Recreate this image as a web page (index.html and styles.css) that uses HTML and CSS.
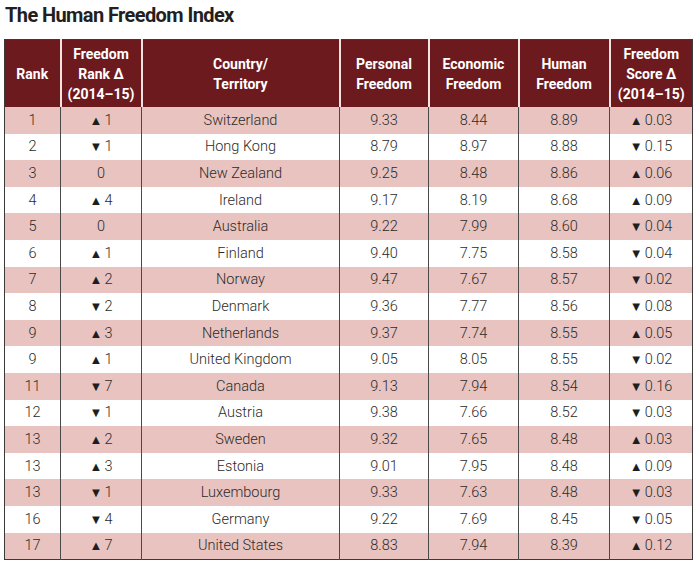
FILE: index.html
```html
<!DOCTYPE html>
<html lang="en">
<head>
<meta charset="utf-8">
<title>The Human Freedom Index</title>
<link rel="stylesheet" href="styles.css">
</head>
<body>
<div class="page">
  <h1 class="title">The Human Freedom Index</h1>
  <table class="hfi">
    <colgroup>
      <col class="c-rank"><col class="c-rd"><col class="c-country"><col class="c-pf"><col class="c-ef"><col class="c-hf"><col class="c-sd">
    </colgroup>
    <thead>
      <tr>
        <th>Rank</th>
        <th>Freedom<br>Rank Δ<br>(2014–15)</th>
        <th>Country/<br>Territory</th>
        <th>Personal<br>Freedom</th>
        <th>Economic<br>Freedom</th>
        <th>Human<br>Freedom</th>
        <th>Freedom<br>Score Δ<br>(2014–15)</th>
      </tr>
    </thead>
    <tbody>
      <tr class="alt"><td>1</td><td><span class="tri">▲</span>1</td><td>Switzerland</td><td>9.33</td><td>8.44</td><td>8.89</td><td><span class="tri">▲</span>0.03</td></tr>
      <tr><td>2</td><td><span class="tri">▼</span>1</td><td>Hong Kong</td><td>8.79</td><td>8.97</td><td>8.88</td><td><span class="tri">▼</span>0.15</td></tr>
      <tr class="alt"><td>3</td><td>0</td><td>New Zealand</td><td>9.25</td><td>8.48</td><td>8.86</td><td><span class="tri">▲</span>0.06</td></tr>
      <tr><td>4</td><td><span class="tri">▲</span>4</td><td>Ireland</td><td>9.17</td><td>8.19</td><td>8.68</td><td><span class="tri">▲</span>0.09</td></tr>
      <tr class="alt"><td>5</td><td>0</td><td>Australia</td><td>9.22</td><td>7.99</td><td>8.60</td><td><span class="tri">▼</span>0.04</td></tr>
      <tr><td>6</td><td><span class="tri">▲</span>1</td><td>Finland</td><td>9.40</td><td>7.75</td><td>8.58</td><td><span class="tri">▼</span>0.04</td></tr>
      <tr class="alt"><td>7</td><td><span class="tri">▲</span>2</td><td>Norway</td><td>9.47</td><td>7.67</td><td>8.57</td><td><span class="tri">▼</span>0.02</td></tr>
      <tr><td>8</td><td><span class="tri">▼</span>2</td><td>Denmark</td><td>9.36</td><td>7.77</td><td>8.56</td><td><span class="tri">▼</span>0.08</td></tr>
      <tr class="alt"><td>9</td><td><span class="tri">▲</span>3</td><td>Netherlands</td><td>9.37</td><td>7.74</td><td>8.55</td><td><span class="tri">▲</span>0.05</td></tr>
      <tr><td>9</td><td><span class="tri">▲</span>1</td><td>United Kingdom</td><td>9.05</td><td>8.05</td><td>8.55</td><td><span class="tri">▼</span>0.02</td></tr>
      <tr class="alt"><td>11</td><td><span class="tri">▼</span>7</td><td>Canada</td><td>9.13</td><td>7.94</td><td>8.54</td><td><span class="tri">▼</span>0.16</td></tr>
      <tr><td>12</td><td><span class="tri">▼</span>1</td><td>Austria</td><td>9.38</td><td>7.66</td><td>8.52</td><td><span class="tri">▼</span>0.03</td></tr>
      <tr class="alt"><td>13</td><td><span class="tri">▲</span>2</td><td>Sweden</td><td>9.32</td><td>7.65</td><td>8.48</td><td><span class="tri">▲</span>0.03</td></tr>
      <tr><td>13</td><td><span class="tri">▲</span>3</td><td>Estonia</td><td>9.01</td><td>7.95</td><td>8.48</td><td><span class="tri">▲</span>0.09</td></tr>
      <tr class="alt"><td>13</td><td><span class="tri">▼</span>1</td><td>Luxembourg</td><td>9.33</td><td>7.63</td><td>8.48</td><td><span class="tri">▼</span>0.03</td></tr>
      <tr><td>16</td><td><span class="tri">▼</span>4</td><td>Germany</td><td>9.22</td><td>7.69</td><td>8.45</td><td><span class="tri">▼</span>0.05</td></tr>
      <tr class="alt"><td>17</td><td><span class="tri">▲</span>7</td><td>United States</td><td>8.83</td><td>7.94</td><td>8.39</td><td><span class="tri">▲</span>0.12</td></tr>
    </tbody>
  </table>
</div>
</body>
</html>
```
FILE: styles.css
```css
html, body {
  margin: 0;
  padding: 0;
  background: #ffffff;
}

.page {
  padding: 4px 5px 0 4px;
  font-family: Roboto, "Liberation Sans", sans-serif;
}

.title {
  margin: 0 0 13px 1px;
  font-size: 20px;
  line-height: 22px;
  font-weight: 700;
  color: #231f20;
  letter-spacing: -0.6px;
}

.hfi {
  width: 688px;
  border-collapse: collapse;
  table-layout: fixed;
  border: 1.5px solid #3a3a3a;
}

.c-rank { width: 56px; }
.c-rd { width: 81px; }
.c-country { width: 198px; }
.c-pf { width: 89px; }
.c-ef { width: 90px; }
.c-hf { width: 91px; }
.c-sd { width: 83px; }

.hfi th {
  background: #6d1a1f;
  color: #ffffff;
  font-size: 14px;
  font-weight: 700;
  line-height: 20px;
  height: 67px;
  padding: 0;
  text-align: center;
  vertical-align: middle;
  border-left: 2px solid #f3e3e1;
}

.hfi th:first-child {
  border-left: none;
}

.hfi td {
  height: 26.6px;
  padding: 0;
  text-align: center;
  vertical-align: middle;
  font-size: 14.5px;
  font-weight: 300;
  color: #2b2b2b;
  border-left: 1px solid #4a4a4a;
}

.hfi td:first-child {
  border-left: none;
}

.hfi tr.alt td {
  background: #e8c3bf;
}

.tri {
  display: inline-block;
  margin-right: 2px;
  font-family: "DejaVu Sans", sans-serif;
  font-size: 13px;
  color: #1e1e1e;
}
```
